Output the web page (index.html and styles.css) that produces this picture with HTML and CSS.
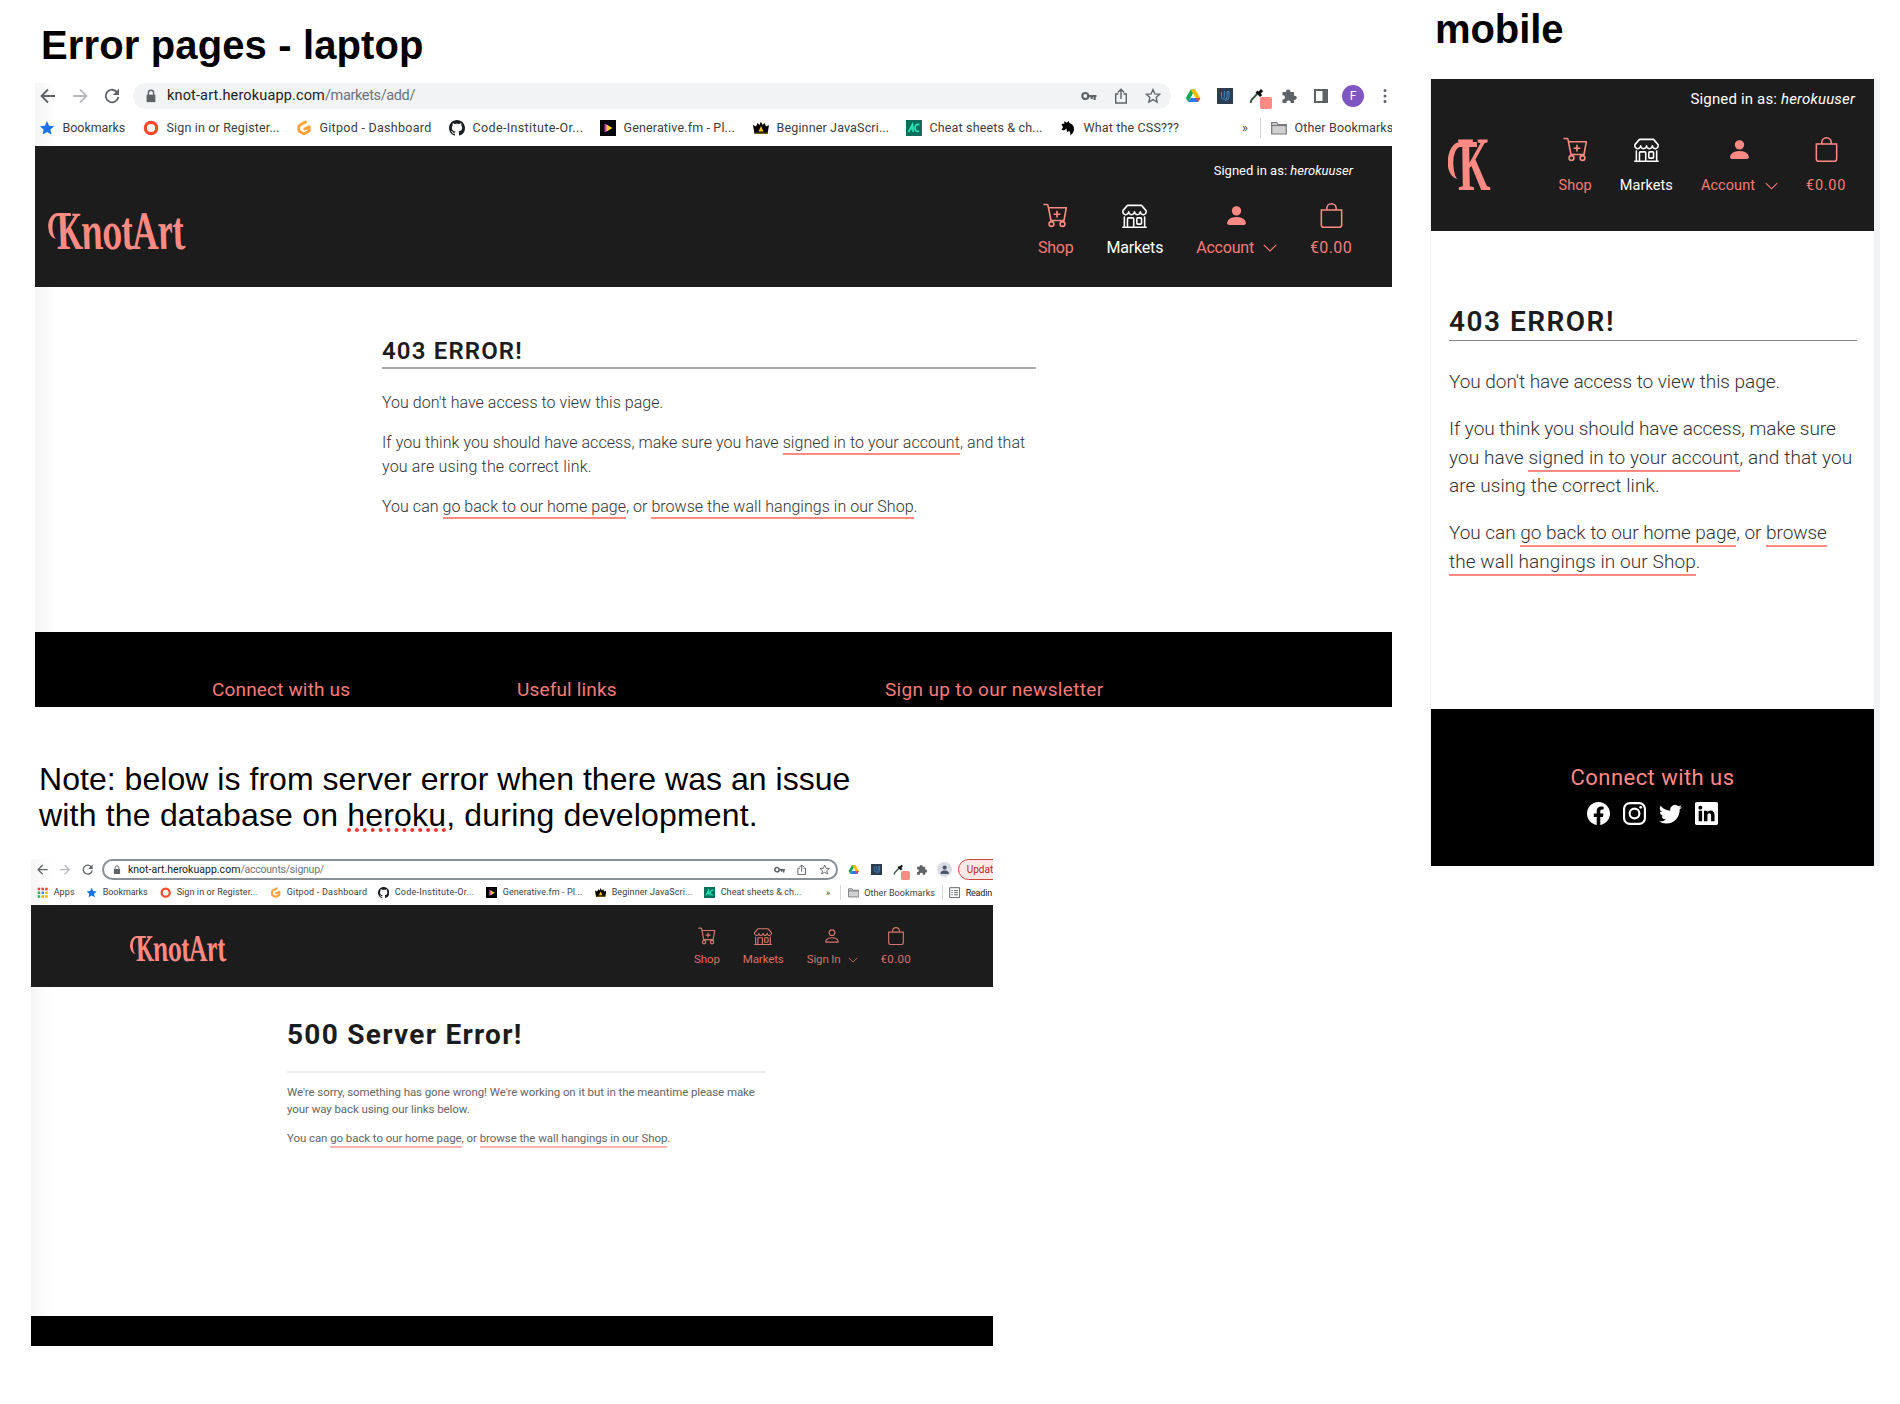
FILE: index.html
```html
<!DOCTYPE html>
<html lang="en">
<head>
<meta charset="utf-8">
<title>Error pages</title>
<link rel="stylesheet" href="styles.css">
</head>
<body>
<svg class="defs" aria-hidden="true">
  <symbol id="back" viewBox="0 0 16 16"><path d="M15 8H2M8 1.5 1.5 8 8 14.5" fill="none" stroke="currentColor" stroke-width="1.8"/></symbol>
  <symbol id="forward" viewBox="0 0 16 16"><path d="M1 8h13M8 1.5 14.500 8 8 14.500" fill="none" stroke="currentColor" stroke-width="1.8"/></symbol>
  <symbol id="reload" viewBox="0 0 16 16"><path d="M13.300 4.500A6.300 6.300 0 1 0 14.300 9" fill="none" stroke="currentColor" stroke-width="1.800"/><path d="M15 .8v6.200H8.800z" fill="currentColor"/></symbol>
  <symbol id="lock" viewBox="0 0 16 16"><path d="M3 6.500h10V15H3z" fill="currentColor"/><path d="M5 7V4.500a3 3 0 0 1 6 0V7" fill="none" stroke="currentColor" stroke-width="1.600"/></symbol>
  <symbol id="key" viewBox="0 0 16 16"><circle cx="4.300" cy="8" r="3" fill="none" stroke="currentColor" stroke-width="2.200"/><path d="M7 8h8.500M13.600 8v4M10.700 8v3" fill="none" stroke="currentColor" stroke-width="2.200"/></symbol>
  <symbol id="share" viewBox="0 0 16 16"><path d="M5.500 6H2.700v9h10.600V6h-2.800M8 11V1.500M4.800 4.500 8 1.300l3.200 3.200" fill="none" stroke="currentColor" stroke-width="1.400"/></symbol>
  <symbol id="star" viewBox="0 0 16 16"><path d="m8 1.500 1.900 4.400 4.800.4-3.600 3.100 1.100 4.700L8 11.600l-4.200 2.500 1.100-4.700L1.300 6.300l4.800-.4z" fill="none" stroke="currentColor" stroke-width="1.300"/></symbol>
  <symbol id="star-fill" viewBox="0 0 16 16"><path d="m8 1 2.100 4.700 5.100.5-3.800 3.400 1.100 5L8 12l-4.500 2.600 1.100-5L.8 6.200l5.100-.5z" fill="#1a73e8"/></symbol>
  <symbol id="drive" viewBox="0 0 16 16"><path d="M5.700 1.500h4.600l-7 12.500L.8 10z" fill="#0fa958"/><path d="M5.700 1.500h4.600l5 8.500h-4.900z" fill="#fbbc04"/><path d="M5.800 10h9.500L13 14H3.300z" fill="#2a78f0"/><path d="m8 5.800 2.400 4.200H5.700z" fill="#fff"/><path d="M10.400 10h4.900L13 14z" fill="#ea4335"/></symbol>
  <symbol id="u-ext" viewBox="0 0 16 16"><path d="M0 0h16v16H0z" fill="#2b3d4f"/><path d="M4.500 4v4.500a2.800 2.800 0 0 0 5.600 0V4M7.300 3v6.500M10 3.500h2v5a4 4 0 0 1-4 4" fill="none" stroke="#3c8fd0" stroke-width="1"/></symbol>
  <symbol id="dropper" viewBox="0 0 16 16"><path d="m8.500 5.500-6 6.500-1 3" fill="none" stroke="#3d5c48" stroke-width="2"/><path d="m7.500 3.500 4.700 4.500M10 5.500 13 2" stroke="#111" stroke-width="3"/></symbol>
  <symbol id="puzzle" viewBox="0 0 16 16"><path d="M1.500 4h3.700a2.100 2.100 0 1 1 4.100 0h3.700v3.800a2.100 2.100 0 1 1 0 4V15H9.600a2.100 2.100 0 1 0-4.100 0H1.500v-3.700a2 2 0 1 0 0-3.900z" fill="currentColor"/></symbol>
  <symbol id="panel" viewBox="0 0 16 16"><path d="M2 2h12v12H2z" fill="none" stroke="currentColor" stroke-width="2"/><path d="M9.500 2H14v12H9.500z" fill="currentColor"/></symbol>
  <symbol id="dots" viewBox="0 0 16 16"><circle cx="8" cy="2.500" r="1.500"/><circle cx="8" cy="8" r="1.500"/><circle cx="8" cy="13.500" r="1.500"/></symbol>
  <symbol id="apps" viewBox="0 0 16 16"><path d="M1 1h3.500v3.500H1zM6.300 1h3.500v3.500H6.300zM11.500 1H15v3.500h-3.500z" fill="#ea4335"/><path d="M1 6.300h3.500v3.500H1z" fill="#34a853"/><path d="M6.300 6.300h3.500v3.500H6.300z" fill="#4285f4"/><path d="M11.500 6.300H15v3.500h-3.500zM6.300 11.500h3.500V15H6.300zM11.500 11.500H15V15h-3.500z" fill="#f9ab00"/><path d="M1 11.500h3.500V15H1z" fill="#34a853"/></symbol>
  <symbol id="ring" viewBox="0 0 16 16"><circle cx="8" cy="8" r="5.700" fill="none" stroke="#ff4a2b" stroke-width="3.200"/></symbol>
  <symbol id="gitpod" viewBox="0 0 16 16"><path d="M9.500 1.900 3.700 5.200a1.800 1.800 0 0 0-.9 1.600v3.300c0 .6.300 1.200.9 1.500l3.400 1.900c.6.300 1.200.3 1.800 0l3.400-1.900c.6-.3.900-.9.900-1.500V6.700L8.800 9.100" fill="none" stroke="#ffa23c" stroke-width="2.900" stroke-linecap="round" stroke-linejoin="round"/></symbol>
  <symbol id="github" viewBox="0 0 16 16"><path fill="#1b1f23" d="M8 0C3.580 0 0 3.580 0 8c0 3.540 2.290 6.530 5.470 7.590.4.070.55-.17.55-.38 0-.19-.01-.82-.01-1.490-2.010.37-2.530-.49-2.690-.94-.09-.23-.48-.94-.82-1.130-.28-.15-.68-.52-.01-.53.63-.01 1.080.58 1.230.82.72 1.210 1.870.87 2.330.66.070-.52.28-.87.51-1.070-1.780-.2-3.640-.89-3.640-3.950 0-.87.31-1.590.82-2.150-.08-.2-.36-1.020.08-2.120 0 0 .67-.21 2.200.82.64-.18 1.320-.27 2-.27s1.360.09 2 .27c1.530-1.040 2.200-.82 2.200-.82.44 1.100.16 1.920.08 2.120.51.56.82 1.270.82 2.150 0 3.070-1.870 3.750-3.650 3.950.29.25.54.73.54 1.480 0 1.070-.01 1.930-.01 2.200 0 .21.15.46.55.38A8.010 8.010 0 0 0 16 8c0-4.420-3.580-8-8-8z"/></symbol>
  <symbol id="generative" viewBox="0 0 16 16"><path d="M0 0h16v16H0z"/><path d="M4.500 3.500v9L8 10.500v-5z" fill="#d63ad6"/><path d="m6.500 4.500 6 3.500-6 3.500z" fill="#ffd21f"/></symbol>
  <symbol id="crown" viewBox="0 0 16 16"><path d="m0 5 3 1.500L4.500 3l2 2L8 1.500 9.500 5l2-2L13 6.500 16 5l-1.500 9h-13z"/><path d="m8 6 2.500 5.500h-5z" fill="#f5c518"/><path d="M2 12.500h12V14H2z" fill="#6b5510"/></symbol>
  <symbol id="ac" viewBox="0 0 16 16"><path d="M0 0h16v16H0z" fill="#0d6e5c"/><path d="m2.500 12 4-7.500.8 7.500M4.500 9h3M13.500 4.500c-3-.8-4.800 1-4.500 4 .2 2 1.500 3.300 4 2.600" fill="none" stroke="#2ee6b5" stroke-width="1.700"/></symbol>
  <symbol id="horse" viewBox="0 0 16 16"><path d="m1.500 4 3-.5L4 1.200l3 1.600L8.500 1l1 2c3 .8 4.500 3.200 4.500 6 0 2.800-1.500 5-4 6.500.8-2 .3-3.500-1-4.500L7 12l-.5-3.500L4 10.500 1.500 9.800 3 7.500z"/></symbol>
  <symbol id="folder" viewBox="0 0 16 16"><path d="M.7 2.500h5l1.300 2h8.300v9.500H.7z" fill="#d0d0d0" stroke="#77797c" stroke-width="1.200"/><path d="M.7 5.500h14.600" stroke="#77797c" stroke-width="1.200"/></symbol>
  <symbol id="list" viewBox="0 0 16 16"><path d="M1 1h14v14H1z" fill="none" stroke="#5f6368" stroke-width="1.400"/><path d="M3.500 5h1.800M3.500 8h1.800M3.500 11h1.800M7 5h5.500M7 8h5.500M7 11h5.500" stroke="#5f6368" stroke-width="1.400"/></symbol>
  <symbol id="cart" viewBox="0 0 25 25"><path d="M.5 1.500H4c.6 0 .9.300 1 .9L8 17.500h13l2.300-12.700H5.500M14 7.800v6.800M10.600 11.200h6.800" fill="none" stroke="currentColor" stroke-width="1.600" stroke-linejoin="round"/><circle cx="8.500" cy="21" r="2.400" fill="none" stroke="currentColor" stroke-width="1.600"/><circle cx="19.500" cy="21" r="2.400" fill="none" stroke="currentColor" stroke-width="1.600"/></symbol>
  <symbol id="shop" viewBox="0 0 16 16"><path fill="currentColor" d="M2.970 1.350A1 1 0 0 1 3.730 1h8.540a1 1 0 0 1 .76.350l2.609 3.044A1.500 1.500 0 0 1 16 5.370v.255a2.375 2.375 0 0 1-4.250 1.458A2.371 2.371 0 0 1 9.875 8 2.370 2.370 0 0 1 8 7.083 2.370 2.370 0 0 1 6.125 8a2.370 2.370 0 0 1-1.875-.917A2.375 2.375 0 0 1 0 5.625V5.370a1.500 1.500 0 0 1 .361-.976l2.610-3.045zm1.780 4.275a1.375 1.375 0 0 0 2.750 0 .5.5 0 0 1 1 0 1.375 1.375 0 0 0 2.750 0 .5.5 0 0 1 1 0 1.375 1.375 0 1 0 2.750 0V5.370a.5.5 0 0 0-.12-.325L12.270 2H3.730L1.120 5.045A.5.5 0 0 0 1 5.370v.255a1.375 1.375 0 0 0 2.750 0 .5.5 0 0 1 1 0zM1.500 8.500A.5.5 0 0 1 2 9v6h1v-5a1 1 0 0 1 1-1h3a1 1 0 0 1 1 1v5h6V9a.5.5 0 0 1 1 0v6h.5a.5.5 0 0 1 0 1H.5a.5.5 0 0 1 0-1H1V9a.5.5 0 0 1 .5-.5zM4 15h3v-5H4v5zm5-5a1 1 0 0 1 1-1h2a1 1 0 0 1 1 1v3a1 1 0 0 1-1 1h-2a1 1 0 0 1-1-1v-3zm3 0h-2v3h2v-3z"/></symbol>
  <symbol id="bag" viewBox="0 0 16 16"><path fill="currentColor" d="M8 1a2.500 2.500 0 0 1 2.500 2.500V4h-5v-.5A2.500 2.500 0 0 1 8 1zm3.500 3v-.5a3.500 3.500 0 1 0-7 0V4H1v10a2 2 0 0 0 2 2h10a2 2 0 0 0 2-2V4h-3.500zM2 5h12v9a1 1 0 0 1-1 1H3a1 1 0 0 1-1-1V5z"/></symbol>
  <symbol id="person" viewBox="0 0 16 16"><path fill="currentColor" d="M8 8a3 3 0 1 0 0-6 3 3 0 0 0 0 6zm2-3a2 2 0 1 1-4 0 2 2 0 0 1 4 0zm4 8c0 1-1 1-1 1H3s-1 0-1-1 1-4 6-4 6 3 6 4zm-1-.004c-.001-.246-.154-.986-.832-1.664C11.516 10.680 10.289 10 8 10c-2.290 0-3.516.680-4.168 1.332-.678.678-.830 1.418-.832 1.664h10z"/></symbol>
  <symbol id="person-fill" viewBox="0 0 16 16"><path fill="currentColor" d="M3 14s-1 0-1-1 1-4 6-4 6 3 6 4-1 1-1 1H3zm5-6a3 3 0 1 0 0-6 3 3 0 0 0 0 6z"/></symbol>
  <symbol id="chevron" viewBox="0 0 14 8"><path d="m.8.800 6.200 6.200L13.200.800" fill="none" stroke="currentColor" stroke-width="1.200"/></symbol>
  <symbol id="facebook" viewBox="0 0 16 16"><path fill="currentColor" d="M16 8.049c0-4.446-3.582-8.050-8-8.050C3.580 0-.002 3.603-.002 8.050c0 4.017 2.926 7.347 6.750 7.951v-5.625h-2.030V8.050H6.750V6.275c0-2.017 1.195-3.131 3.022-3.131.876 0 1.791.157 1.791.157v1.980h-1.009c-.993 0-1.303.621-1.303 1.258v1.510h2.218l-.354 2.326H9.250V16c3.824-.604 6.750-3.934 6.750-7.951z"/></symbol>
  <symbol id="instagram" viewBox="0 0 16 16"><rect x=".75" y=".75" width="14.500" height="14.500" rx="4" fill="none" stroke="currentColor" stroke-width="1.500"/><circle cx="8" cy="8" r="3.400" fill="none" stroke="currentColor" stroke-width="1.500"/><circle cx="12.300" cy="3.700" r="1" fill="currentColor"/></symbol>
  <symbol id="twitter" viewBox="0 0 16 16"><path fill="currentColor" d="M5.026 15c6.038 0 9.341-5.003 9.341-9.334 0-.14 0-.282-.006-.422A6.685 6.685 0 0 0 16 3.542a6.658 6.658 0 0 1-1.889.518 3.301 3.301 0 0 0 1.447-1.817 6.533 6.533 0 0 1-2.087.793A3.286 3.286 0 0 0 7.875 6.030a9.325 9.325 0 0 1-6.767-3.429 3.289 3.289 0 0 0 1.018 4.382A3.323 3.323 0 0 1 .64 6.575v.045a3.288 3.288 0 0 0 2.632 3.218 3.203 3.203 0 0 1-.865.115 3.230 3.230 0 0 1-.614-.057 3.283 3.283 0 0 0 3.067 2.277A6.588 6.588 0 0 1 .78 13.580a6.320 6.320 0 0 1-.78-.045A9.344 9.344 0 0 0 5.026 15z"/></symbol>
  <symbol id="linkedin" viewBox="0 0 16 16"><path fill="currentColor" d="M0 1.146C0 .513.526 0 1.175 0h13.650C15.474 0 16 .513 16 1.146v13.708c0 .633-.526 1.146-1.175 1.146H1.175C.526 16 0 15.487 0 14.854V1.146zm4.943 12.248V6.169H2.542v7.225h2.401zm-1.200-8.212c.837 0 1.358-.554 1.358-1.248-.015-.709-.52-1.248-1.342-1.248-.822 0-1.359.54-1.359 1.248 0 .694.521 1.248 1.327 1.248h.016zm4.908 8.212V9.359c0-.216.016-.432.080-.586.173-.431.568-.878 1.232-.878.869 0 1.216.662 1.216 1.634v3.865h2.401V9.250c0-2.220-1.184-3.252-2.764-3.252-1.274 0-1.845.7-2.165 1.193v.025h-.016a5.540 5.540 0 0 1 .016-.025V6.169h-2.400c.030.678 0 7.225 0 7.225h2.400z"/></symbol>
</svg>

<main class="board">
  <div class="col-main">
    <h1 class="title">Error pages - laptop</h1>

    <section class="window laptop">
      <div class="toolbar">
        <div class="cell"><svg><use href="#back"/></svg></div>
        <div class="cell dim"><svg><use href="#forward"/></svg></div>
        <div class="cell"><svg><use href="#reload"/></svg></div>
        <div class="address">
          <svg class="lock"><use href="#lock"/></svg>
          <span class="url">knot-art.herokuapp.com<span class="path">/markets/add/</span></span>
          <div class="cell"><svg><use href="#key"/></svg></div>
          <div class="cell"><svg><use href="#share"/></svg></div>
          <div class="cell"><svg><use href="#star"/></svg></div>
        </div>
        <div class="cell"><svg><use href="#drive"/></svg></div>
        <div class="cell"><svg><use href="#u-ext"/></svg></div>
        <div class="cell swatch"><svg><use href="#dropper"/></svg></div>
        <div class="cell"><svg><use href="#puzzle"/></svg></div>
        <div class="cell"><svg><use href="#panel"/></svg></div>
        <div class="cell"><span class="avatar">F</span></div>
        <div class="cell"><svg><use href="#dots"/></svg></div>
      </div>
      <div class="bookmarks">
        <div class="bm tight"><svg><use href="#star-fill"/></svg><span>Bookmarks</span></div>
        <div class="bm"><svg><use href="#ring"/></svg><span>Sign in or Register...</span></div>
        <div class="bm loose"><svg><use href="#gitpod"/></svg><span>Gitpod - Dashboard</span></div>
        <div class="bm looser"><svg><use href="#github"/></svg><span>Code-Institute-Or...</span></div>
        <div class="bm"><svg><use href="#generative"/></svg><span>Generative.fm - Pl...</span></div>
        <div class="bm"><svg><use href="#crown"/></svg><span>Beginner JavaScri...</span></div>
        <div class="bm"><svg><use href="#ac"/></svg><span>Cheat sheets &amp; ch...</span></div>
        <div class="bm"><svg><use href="#horse"/></svg><span>What the CSS???</span></div>
        <div class="bm more">»</div>
        <div class="bm split"><svg><use href="#folder"/></svg><span>Other Bookmarks</span></div>
      </div>
      <header class="site-head">
        <div class="logo"><span>KnotArt</span></div>
        <div class="head-right">
          <p class="signed">Signed in as: <i>herokuuser</i></p>
          <nav class="nav">
            <a><svg><use href="#cart"/></svg><b>Shop</b></a>
            <a class="on"><svg><use href="#shop"/></svg><b>Markets</b></a>
            <a><svg><use href="#person-fill"/></svg><b>Account<svg class="chev"><use href="#chevron"/></svg></b></a>
            <a><svg><use href="#bag"/></svg><b class="price">€0.00</b></a>
          </nav>
        </div>
      </header>
      <div class="content">
        <h2>403 ERROR!</h2>
        <p>You don't have access to view this page.</p>
        <p><span class="wide">If you think you should have access, make sure you have <u>signed in to your account</u>, and that</span><br><span class="open">you are using the correct link.</span></p>
        <p>You can <u>go back to our home page</u>, or <u>browse the wall hangings in our Shop</u>.</p>
      </div>
      <footer class="site-foot">
        <h3>Connect with us</h3>
        <h3>Useful links</h3>
        <h3 class="newsletter">Sign up to our newsletter</h3>
      </footer>
    </section>

    <p class="note">Note: below is from server error when there was an issue<br><span class="open">with the database on <span class="typo">heroku</span>, during development.</span></p>

    <section class="window small">
      <div class="toolbar">
        <div class="cell"><svg><use href="#back"/></svg></div>
        <div class="cell dim"><svg><use href="#forward"/></svg></div>
        <div class="cell"><svg><use href="#reload"/></svg></div>
        <div class="address">
          <svg class="lock"><use href="#lock"/></svg>
          <span class="url">knot-art.herokuapp.com<span class="path">/accounts/signup/</span></span>
          <div class="cell"><svg><use href="#key"/></svg></div>
          <div class="cell"><svg><use href="#share"/></svg></div>
          <div class="cell"><svg><use href="#star"/></svg></div>
        </div>
        <div class="cell"><svg><use href="#drive"/></svg></div>
        <div class="cell"><svg><use href="#u-ext"/></svg></div>
        <div class="cell swatch"><svg><use href="#dropper"/></svg></div>
        <div class="cell"><svg><use href="#puzzle"/></svg></div>
        <div class="cell"><span class="avatar guest"><svg><use href="#person-fill"/></svg></span></div>
        <div class="update">Updat</div>
      </div>
      <div class="bookmarks">
        <div class="bm"><svg><use href="#apps"/></svg><span>Apps</span></div>
        <div class="bm tight"><svg><use href="#star-fill"/></svg><span>Bookmarks</span></div>
        <div class="bm"><svg><use href="#ring"/></svg><span>Sign in or Register...</span></div>
        <div class="bm loose"><svg><use href="#gitpod"/></svg><span>Gitpod - Dashboard</span></div>
        <div class="bm looser"><svg><use href="#github"/></svg><span>Code-Institute-Or...</span></div>
        <div class="bm"><svg><use href="#generative"/></svg><span>Generative.fm - Pl...</span></div>
        <div class="bm"><svg><use href="#crown"/></svg><span>Beginner JavaScri...</span></div>
        <div class="bm"><svg><use href="#ac"/></svg><span>Cheat sheets &amp; ch...</span></div>
        <div class="bm more">»</div>
        <div class="bm split"><svg><use href="#folder"/></svg><span>Other Bookmarks</span></div>
        <div class="bm split reading"><svg><use href="#list"/></svg><span>Readin</span></div>
      </div>
      <header class="site-head">
        <div class="logo"><span>KnotArt</span></div>
        <nav class="nav">
          <a><svg><use href="#cart"/></svg><b>Shop</b></a>
          <a><svg><use href="#shop"/></svg><b>Markets</b></a>
          <a><svg><use href="#person"/></svg><b>Sign In<svg class="chev"><use href="#chevron"/></svg></b></a>
          <a><svg><use href="#bag"/></svg><b class="price">€0.00</b></a>
        </nav>
      </header>
      <div class="content">
        <h2>500 Server Error!</h2>
        <p>We're sorry, something has gone wrong! We're working on it but in the meantime please make<br>your way back using our links below.</p>
        <p>You can <u>go back to our home page</u>, or <u>browse the wall hangings in our Shop</u>.</p>
      </div>
      <footer class="site-foot"></footer>
    </section>
  </div>

  <div class="col-mobile">
    <h1 class="title">mobile</h1>
    <section class="phone">
      <header class="site-head">
        <div class="logo"><span>K</span></div>
        <div class="head-right">
          <p class="signed">Signed in as: <i>herokuuser</i></p>
          <nav class="nav">
            <a><svg><use href="#cart"/></svg><b>Shop</b></a>
            <a class="on"><svg><use href="#shop"/></svg><b>Markets</b></a>
            <a><svg><use href="#person-fill"/></svg><b>Account<svg class="chev"><use href="#chevron"/></svg></b></a>
            <a><svg><use href="#bag"/></svg><b class="price">€0.00</b></a>
          </nav>
        </div>
      </header>
      <div class="content">
        <h2>403 ERROR!</h2>
        <p>You don't have access to view this page.</p>
        <p>If you think you should have access, make sure<br><span class="open">you have <u>signed in to your account</u>, and that you<br>are using the correct link.</span></p>
        <p>You can <u>go back to our home page</u>, or <u>browse</u><br><span class="open"><u>the wall hangings in our Shop</u>.</span></p>
      </div>
      <footer class="site-foot">
        <h3>Connect with us</h3>
        <div class="social">
          <svg><use href="#facebook"/></svg><svg><use href="#instagram"/></svg><svg><use href="#twitter"/></svg><svg><use href="#linkedin"/></svg>
        </div>
      </footer>
    </section>
  </div>
</main>
</body>
</html>
```
FILE: styles.css
```css
* { box-sizing: border-box; }
body {
  margin: 0;
  background: #fff;
  color: #000;
  font-family: Roboto, "Liberation Sans", sans-serif;
}
.defs { position: absolute; width: 0; height: 0; }
h1, h2, h3, p { margin: 0; }
svg { display: block; flex: none; }
span, p, .bm, .title { white-space: nowrap; }

.board { display: flex; width: 1900px; height: 1404px; overflow: hidden; }
.col-main { width: 1430px; padding-top: 22px; }
.col-mobile { width: 470px; padding-top: 6px; }

.title { font: bold 40px/46px "Liberation Sans", Arial, sans-serif; letter-spacing: .13px; }
.col-main .title { margin-left: 41px; }
.col-mobile .title { margin-left: 5px; letter-spacing: -.1px; }
.note {
  margin: 54px 0 0 39px;
  font: 32px/36px "Liberation Sans", Arial, sans-serif;
  letter-spacing: .04px;
}
.note .open { letter-spacing: .19px; }
.typo { text-decoration: underline dotted #f33 4px; text-underline-offset: 2px; text-decoration-skip-ink: none; }

/* Browser windows: --k scales the browser chrome */
.window { display: flex; flex-direction: column; overflow: hidden; background: linear-gradient(90deg, #f6f6f6, #fff 22px); }
.laptop { --k: 1; width: 1357px; height: 624px; margin: 15px 0 0 35px; }
.small { --k: .71; width: 962px; height: 487px; margin: 26px 0 0 31px; }

.toolbar { display: flex; height: 26px; color: #5f6368; }
.small .toolbar { height: 21px; }
.cell { display: flex; flex: none; width: calc(32px * var(--k)); align-items: center; justify-content: center; }
.cell svg { width: calc(16px * var(--k)); height: calc(16px * var(--k)); fill: currentColor; }
.laptop .toolbar > .cell:first-child { margin-left: -3px; }
.dim { color: #b8babd; }
.address { display: flex; flex: none; width: 1038px; margin: 0 6px 0 5px; padding-right: 2px; align-items: stretch; border-radius: 13px; background: #f1f3f4; }
.small .address { width: 736px; margin: 0 4px 0 3px; padding-right: 0; border: 2px solid #8a9196; border-radius: 11px; background: #fff; }
.lock { align-self: center; width: calc(14px * var(--k)); height: calc(14px * var(--k)); margin-left: calc(11px * var(--k)); }
.url { flex: 1; align-self: center; margin-left: calc(9px * var(--k)); color: #202124; font-size: 14.500px; line-height: 18px; letter-spacing: .148px; }
.small .url { margin-left: 6px; font-size: 10.500px; line-height: 14px; letter-spacing: .02px; }
.path { color: #6f7276; letter-spacing: -.37px; }
.small .path { letter-spacing: -.23px; }
.swatch { position: relative; }
.swatch::after { content: ""; position: absolute; right: calc(1px * var(--k)); bottom: 0; width: calc(12px * var(--k)); height: calc(12px * var(--k)); border-radius: 2px; background: #ff8a84; }
.avatar { display: flex; width: 22px; height: 22px; align-items: center; justify-content: center; border-radius: 50%; background: #7e57c2; color: #fff; font-size: 12px; }
.avatar.guest { width: 15px; height: 15px; background: #dadce5; color: #4a5568; }
.update { flex: none; width: 60px; margin-left: 2px; padding-left: 8px; border: 1.500px solid #d04543; border-radius: 11px; background: #fce8e6; color: #c5221f; font-size: 10px; line-height: 19px; }

.bookmarks { display: grid; height: 37px; padding-left: 4px; align-items: center; grid-template-columns: 104px 153px 153px 151px 153px 153px 154px 182px 18px 140px; color: #3c4043; font-size: 12.500px; letter-spacing: .15px; }
.small .bookmarks { height: 25px; padding-left: 6px; grid-template-columns: 49px 74px 110px 108px 108px 109px 109px 122px 13.500px 102.500px 60px; font-size: 9px; letter-spacing: .08px; }
.bm { display: flex; align-items: center; gap: calc(7.500px * var(--k)); }
.bm svg { width: calc(16px * var(--k)); height: calc(16px * var(--k)); }
.tight { letter-spacing: -.05px; }
.loose { letter-spacing: calc(.28px * var(--k)); }
.looser { letter-spacing: calc(.37px * var(--k)); }
.split { height: calc(20px * var(--k)); padding-left: calc(10px * var(--k)); border-left: 1px solid #d5d7da; }
.reading { padding-left: 6px; color: #202124; letter-spacing: -.2px; }

/* Site header */
.site-head { display: flex; justify-content: space-between; background: #1c1c1c; }
.laptop .site-head { height: 141px; padding: 16px 40px 0 14px; }
.small .site-head { height: 82px; padding: 22px 82px 0 99px; }
.phone .site-head { height: 152px; padding: 11px 28px 0 18px; }

/* Wordmark: condensed serif with a hooked swash in front of the K */
.logo { color: #ff8a84; font: italic bold 54px/60px "Liberation Serif", serif; }
.logo span { position: relative; display: inline-block; transform: skewX(9deg) scaleX(.71); transform-origin: 0 100%; }
.logo span::before {
  content: "";
  position: absolute;
  left: -.17em;
  top: .23em;
  width: .5em;
  height: .42em;
  border: solid currentColor;
  border-width: .07em 0 0 .12em;
  border-radius: .4em 0 0 .3em;
  transform: skewX(-9deg);
}
.laptop .logo { width: 150px; padding: 39px 0 0 11px; }
.small .logo { width: 110px; padding: 0 0 0 8px; font-size: 38px; line-height: 42px; }
.phone .logo { width: 60px; padding: 34px 0 0 12px; font-size: 77px; line-height: 80px; }
.phone .logo span { transform: skewX(7deg) scaleX(.62); }
.signed { color: #fff; font-size: 13px; line-height: 17px; text-align: right; margin-right: -1px; }
.phone .signed { margin-right: -9px; font-size: 15px; line-height: 18px; letter-spacing: .16px; }
.nav { display: flex; justify-content: flex-end; gap: 33px; margin-top: 24px; color: #ff8a84; }
.nav a { display: flex; flex-direction: column; align-items: center; gap: 9px; }
.nav a > svg { width: 25px; height: 25px; }
.nav b { display: flex; align-items: center; font-size: 16px; font-weight: 400; line-height: 21px; letter-spacing: -.2px; color: #f77b76; }
.nav .on, .nav .on b { color: #fff; }
.nav .price { letter-spacing: .36px; }
.chev { width: 14px; height: 8px; margin-left: 9px; }
.phone .nav { gap: 28px; margin-top: 29px; }
.phone .nav a { gap: 14px; }
.phone .nav b { font-size: 14.500px; line-height: 20px; letter-spacing: .07px; }
.phone .nav .price { letter-spacing: .7px; }
.phone .chev { width: 13px; margin-left: 10px; }
.small .nav { gap: 23px; margin-top: 0; color: #d8776f; }
.small .nav a { gap: 7px; }
.small .nav a > svg { width: 18px; height: 18px; }
.small .nav b { font-size: 11.500px; line-height: 15px; letter-spacing: -.12px; color: #d8706a; }
.small .nav .price { letter-spacing: .3px; }
.small .chev { width: 10px; height: 6px; margin-left: 7px; }

/* Page body */
.content { flex: 1; color: #333; font-weight: 300; }
.content h2 { color: #1c1c1c; font-weight: 600; }
.content u { padding-bottom: 1px; text-decoration: none; border-bottom: 2px solid #ff8a84; }
.content p { margin-bottom: 16px; }
.laptop .content { width: 1001px; padding: 48px 0 0 347px; font-size: 16px; line-height: 24px; letter-spacing: .03px; }
.laptop .content .wide { letter-spacing: .055px; }
.laptop .content .open { letter-spacing: .17px; }
.laptop h2 { margin-bottom: 22px; border-bottom: 2px solid #aaa; font-size: 24px; line-height: 32px; letter-spacing: 1.150px; }
.small .content { width: 735px; padding: 32px 0 0 256px; font-size: 11.500px; line-height: 17px; font-weight: 400; color: #666; letter-spacing: -.075px; }
.small h2 { margin-bottom: 11px; padding-bottom: 20px; border-bottom: 2px solid #eee; font-size: 28px; font-weight: 700; line-height: 32px; letter-spacing: 1.280px; }
.small .content p { margin-bottom: 11.500px; }
.small .content u { border-color: #ffb3af; }

/* Site footer */
.site-foot { background: #000; color: #ff8a84; }
.site-foot h3 { font-size: 19px; font-weight: 400; line-height: 24px; letter-spacing: .16px; }
.site-foot .newsletter { letter-spacing: .34px; }
.laptop .site-foot { display: grid; grid-template-columns: 305px 368px auto; height: 75px; padding: 46px 0 0 177px; color: #f77b76; }
.small .site-foot { height: 30px; }

/* Phone */
.phone { display: flex; flex-direction: column; width: 450px; height: 787px; margin: 27px 0 0; border: solid #f1f3f4; border-width: 0 6px 0 1px; }
.phone .content { padding: 72px 17px 0 18px; font-size: 19px; line-height: 28.500px; letter-spacing: -.045px; }
.phone .content .open { letter-spacing: .09px; }
.phone h2 { margin-bottom: 27px; border-bottom: 1px solid #888; font-size: 28px; line-height: 37px; letter-spacing: 1.500px; }
.phone .content p { margin-bottom: 18.500px; }
.phone .site-foot { display: flex; flex-direction: column; height: 157px; padding-top: 55px; align-items: center; }
.phone .site-foot h3 { font-size: 22px; line-height: 28px; letter-spacing: .45px; }
.social { display: flex; gap: 13px; margin-top: 10px; color: #fff; }
.social svg { width: 23px; height: 23px; }
```
